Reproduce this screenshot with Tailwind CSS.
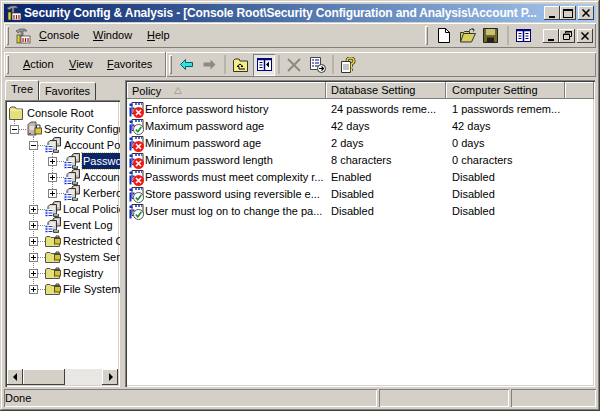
<!DOCTYPE html>
<html lang="en">
<head>
<meta charset="UTF-8">
<title>Security Config &amp; Analysis</title>
<script src="https://cdn.jsdelivr.net/npm/@tailwindcss/browser@4"></script>
</head>
<body class="m-0 overflow-hidden bg-[#d4d0c8]">
<!-- shared icons -->
<svg class="hidden">
  <symbol id="tool" viewBox="0 0 16 16">
    <path d="M1 3 L5 1 L10 1 L12 3 L8 3 L8 8 L6 8 L6 3 L3 5z" fill="#999" stroke="#444" stroke-width=".6"/>
    <rect x="2" y="7" width="3" height="8" fill="#e8d820" stroke="#333" stroke-width=".7"/>
    <rect x="6" y="8" width="9" height="7" fill="#fff" stroke="#333" stroke-width=".7"/>
    <path d="M8 10v4M10.500 10v4M13 10v4" stroke="#a01010" stroke-width="1.200"/>
  </symbol>
  <symbol id="folder" viewBox="0 0 16 16">
    <path d="M1.500 14.500V3.500L3 2h4l1.500 2h6v10.500z" fill="#e6e07a" stroke="#555" stroke-width="1"/>
    <path d="M2.500 5h11" stroke="#fffbc0"/>
  </symbol>
  <symbol id="lockfolder" viewBox="0 0 16 16">
    <path d="M.5 13.500V4.500L2 3.500h3l1 1h8.500v9z" fill="#e6e07a" stroke="#555" stroke-width="1"/>
    <rect x="9.500" y="5.500" width="6" height="5.500" fill="#d8c030" stroke="#333" stroke-width=".8"/>
    <path d="M11 5.500V3h3v2.500" fill="none" stroke="#333" stroke-width="1"/>
  </symbol>
  <symbol id="secsrv" viewBox="0 0 16 16">
    <path d="M2 3.500L5 1h5v13H2z" fill="#bdb9b0" stroke="#444" stroke-width=".9"/>
    <path d="M3.500 6h5M3.500 8h5" stroke="#fff"/>
    <rect x="3" y="12" width="2" height="1" fill="#c02020"/>
    <rect x="9" y="7" width="6.500" height="6" fill="#e0c830" stroke="#333" stroke-width=".8"/>
    <path d="M10.500 7V4h3.500v3" fill="none" stroke="#333" stroke-width="1"/>
  </symbol>
  <symbol id="policy" viewBox="0 0 16 16">
    <path d="M8 2L10 .5h5.500V9H8z" fill="#c4c0b8" stroke="#222" stroke-width=".9"/>
    <path d="M10 3h4M10 5h4" stroke="#fff"/>
    <path d="M3 5.500L5 3.500h6.500V13H3z" fill="#d8d4cc" stroke="#222" stroke-width=".9"/>
    <path d="M5 6h5M5 8h5" stroke="#fff"/>
    <rect x="0" y="8" width="8" height="8" fill="#fff"/>
    <path d="M.5 9.500h2M.5 12h2M.5 14.500h2" stroke="#1030d0" stroke-width="1.400"/>
    <path d="M3.500 9.500h4M3.500 12h4M3.500 14.500h4" stroke="#1030d0" stroke-width="1"/>
    <path d="M8.500 13v2.500h5V13" fill="#a8a49c" stroke="#222" stroke-width=".8"/>
  </symbol>
  <symbol id="bad" viewBox="0 0 16 16">
    <path d="M4 .5h11v11H4z" fill="#fff" stroke="#333"/>
    <path d="M2.500 5.500v9M5.500 5.500v2" stroke="#1830d0" stroke-width="2"/>
    <rect x="1.500" y="1.500" width="3" height="2.500" fill="#1830d0"/>
    <path d="M7 2h2M10 2h2M13 2h1" stroke="#1830d0" stroke-width="1.500"/>
    <circle cx="10.500" cy="10.500" r="5.500" fill="#f01818"/>
    <path d="M8 8l5 5M13 8l-5 5" stroke="#fff" stroke-width="1.600"/>
  </symbol>
  <symbol id="good" viewBox="0 0 16 16">
    <path d="M4 .5h11v11H4z" fill="#fff" stroke="#333"/>
    <path d="M2.500 5.500v9M5.500 5.500v2" stroke="#1830d0" stroke-width="2"/>
    <rect x="1.500" y="1.500" width="3" height="2.500" fill="#1830d0"/>
    <path d="M7 2h2M10 2h2M13 2h1" stroke="#1830d0" stroke-width="1.500"/>
    <circle cx="10.500" cy="10.500" r="5" fill="#fff" stroke="#555" stroke-width="1"/>
    <path d="M7.800 10.500l2 2.300 3.500-4.800" fill="none" stroke="#109030" stroke-width="1.600"/>
  </symbol>
</svg>

<div class="flex h-[411px] w-[600px] flex-col overflow-hidden bg-[#d4d0c8] font-['Liberation_Sans',sans-serif] text-[11px] text-black shadow-[inset_-1px_-1px_0_#404040,inset_1px_1px_0_#d4d0c8,inset_-2px_-2px_0_#808080,inset_2px_2px_0_#fff]">

  <!-- title bar -->
  <div class="mx-[4px] mt-[4px] flex h-[18px] shrink-0 items-center bg-gradient-to-r from-[#0a246a] to-[#a6caf0] pl-[2px] pr-[2px]">
    <svg class="h-[16px] w-[16px] shrink-0"><use href="#tool"/></svg>
    <span class="ml-[2px] flex-1 whitespace-nowrap text-[12px] font-bold leading-[18px] tracking-[-0.15px] text-white">Security Config &amp; Analysis - [Console Root\Security Configuration and Analysis\Account P...</span>
    <div class="flex items-center">
      <button class="flex h-[14px] w-[16px] items-end justify-center bg-[#d4d0c8] pb-[2px] shadow-[inset_-1px_-1px_0_#404040,inset_1px_1px_0_#fff]"><span class="h-[2px] w-[6px] bg-black"></span></button>
      <button class="flex h-[14px] w-[16px] items-center justify-center bg-[#d4d0c8] shadow-[inset_-1px_-1px_0_#404040,inset_1px_1px_0_#fff]"><span class="h-[9px] w-[10px] border border-t-2 border-black"></span></button>
      <button class="ml-[2px] flex h-[14px] w-[16px] items-center justify-center bg-[#d4d0c8] shadow-[inset_-1px_-1px_0_#404040,inset_1px_1px_0_#fff]">
        <svg width="8" height="8" viewBox="0 0 8 8"><path d="M.5.5l7 7M7.500.5l-7 7" stroke="#000" stroke-width="1.500"/></svg>
      </button>
    </div>
  </div>

  <!-- menu band -->
  <div class="mx-[4px] mt-[1px] flex h-[25px] shrink-0 items-center shadow-[inset_0_1px_0_#fff,inset_1px_0_0_#fff,inset_-1px_0_0_#808080,inset_0_-1px_0_#808080]">
    <span class="ml-[2px] h-[19px] w-[3px] bg-[#d4d0c8] shadow-[inset_1px_1px_0_#fff,inset_-1px_-1px_0_#808080]"></span>
    <svg class="ml-[6px] h-[16px] w-[16px]"><use href="#tool"/></svg>
    <nav class="ml-[8px] grid grid-cols-[54px_54px_auto]">
      <span><u>C</u>onsole</span><span><u>W</u>indow</span><span><u>H</u>elp</span>
    </nav>
    <div class="ml-auto flex h-full items-center pr-[3px]">
      <span class="h-[19px] w-[3px] shadow-[inset_1px_1px_0_#fff,inset_-1px_-1px_0_#808080]"></span>
      <svg class="ml-[10px]" width="12" height="15" viewBox="0 0 12 15"><path d="M.5.5h7l4 4v10H.5z" fill="#fff" stroke="#000"/><path d="M7.500.5v4h4" fill="none" stroke="#000"/></svg>
      <svg class="ml-[10px]" width="17" height="15" viewBox="0 0 17 15"><path d="M.5 14V4.500h3l1-1h5v2h-6L.5 14h11l4-8.500H3.500" fill="#d8cf60" stroke="#333"/><path d="M9 2.500Q11 0 14 1.500M14 1.500l-2-.8M14 1.500l-.5 2" fill="none" stroke="#333"/></svg>
      <svg class="ml-[6px]" width="15" height="15" viewBox="0 0 15 15"><path d="M.5.5h14v14H.5z" fill="#6f6a20" stroke="#222"/><rect x="3" y="1" width="9" height="6" fill="#c8c07a"/><rect x="4" y="9.500" width="7" height="5" fill="#222"/></svg>
      <span class="ml-[9px] h-[19px] w-[2px] bg-[#b8b4ac]"></span>
      <svg class="ml-[7px]" width="15" height="13" viewBox="0 0 15 13"><rect x=".5" y=".5" width="14" height="12" fill="#fff" stroke="#00007a"/><path d="M.5 1.500h14M7.500 1v11" stroke="#00007a" stroke-width="1.500"/><path d="M2.500 4.500h3M2.500 7h3M2.500 9.500h3M9.500 4.500h3M9.500 7h3M9.500 9.500h3" stroke="#00007a"/></svg>
      <!-- MDI child buttons -->
      <div class="ml-[12px] flex">
        <button class="flex h-[14px] w-[16px] items-end justify-center bg-[#d4d0c8] pb-[2px] shadow-[inset_-1px_-1px_0_#404040,inset_1px_1px_0_#fff]"><span class="h-[2px] w-[6px] bg-black"></span></button>
        <button class="flex h-[14px] w-[16px] items-center justify-center bg-[#d4d0c8] shadow-[inset_-1px_-1px_0_#404040,inset_1px_1px_0_#fff]">
          <svg width="9" height="9" viewBox="0 0 9 9"><path d="M2.500 2V.5h6v5H7M.5 3h6v5.500h-6z" fill="none" stroke="#000"/><path d="M.5 3.500h6M2.500 1h6" stroke="#000"/></svg>
        </button>
        <button class="ml-[2px] flex h-[14px] w-[16px] items-center justify-center bg-[#d4d0c8] shadow-[inset_-1px_-1px_0_#404040,inset_1px_1px_0_#fff]">
          <svg width="8" height="8" viewBox="0 0 8 8"><path d="M.5.5l7 7M7.500.5l-7 7" stroke="#000" stroke-width="1.500"/></svg>
        </button>
      </div>
    </div>
  </div>

  <!-- action toolbar -->
  <div class="mx-[4px] mt-[4px] flex h-[25px] shrink-0 items-center shadow-[inset_0_1px_0_#fff,inset_1px_0_0_#fff,inset_-1px_0_0_#808080,inset_0_-1px_0_#808080]">
    <span class="ml-[2px] h-[19px] w-[3px] shadow-[inset_1px_1px_0_#fff,inset_-1px_-1px_0_#808080]"></span>
    <nav class="ml-[14px] grid w-[129px] shrink-0 grid-cols-[46px_38px_auto]">
      <span><u>A</u>ction</span><span><u>V</u>iew</span><span><u>F</u>avorites</span>
    </nav>
    <span class="ml-[13px] h-[25px] w-[2px] bg-[#808080] shadow-[inset_-1px_0_0_#fff]"></span>
    <span class="ml-[2px] h-[19px] w-[3px] shadow-[inset_1px_1px_0_#fff,inset_-1px_-1px_0_#808080]"></span>
    <svg class="ml-[8px]" width="13" height="11" viewBox="0 0 13 11"><path d="M.5 5.500L5.500.5v3h7v4h-7v3z" fill="#30e0e8" stroke="#00606a"/></svg>
    <svg class="ml-[10px]" width="13" height="11" viewBox="0 0 13 11"><path d="M12.500 5.500L7.500.5v3h-7v4h7v3z" fill="#8c8a84"/></svg>
    <span class="ml-[8px] h-[19px] w-[2px] bg-[#b8b4ac]"></span>
    <svg class="ml-[7px]" width="15" height="14" viewBox="0 0 15 14"><path d="M.5 13.500V2.500L2 1h4l1 2h7.500v10.500z" fill="#f4ee88" stroke="#333"/><path d="M7 6l-3 2.500h2V11h6M7 6l3 2.500H8" fill="none" stroke="#000"/></svg>
    <span class="ml-[5px] flex h-[22px] w-[22px] items-center justify-center bg-[#e8e6e0] shadow-[inset_1px_1px_0_#808080,inset_-1px_-1px_0_#fff]">
      <svg width="15" height="13" viewBox="0 0 15 13"><rect x=".5" y=".5" width="14" height="12" fill="#fff" stroke="#00007a"/><path d="M.5 1.500h14M7.500 1v11" stroke="#00007a" stroke-width="1.500"/><path d="M2.500 4.500h3M2.500 7h3M2.500 9.500h3" stroke="#00007a"/><path d="M12 3.500v6L9 6.500z" fill="#000"/></svg>
    </span>
    <span class="ml-[3px] h-[19px] w-[2px] bg-[#b8b4ac]"></span>
    <svg class="ml-[7px]" width="14" height="14" viewBox="0 0 14 14"><path d="M1 1l12 12M13 1L1 13" stroke="#8c8a84" stroke-width="2"/></svg>
    <svg class="ml-[9px]" width="16" height="16" viewBox="0 0 16 16"><path d="M.5.5h10v12H.5z" fill="#fff" stroke="#444"/><path d="M2 3h2M5 3h4M2 6h2M5 6h4M2 9h2M5 9h3" stroke="#00007a"/><circle cx="11.500" cy="11.500" r="4" fill="#fff" stroke="#333"/><path d="M9 11.500h4M11.500 9.500l2 2-2 2" fill="none" stroke="#000" stroke-width="1.200"/></svg>
    <span class="ml-[6px] h-[19px] w-[2px] bg-[#b8b4ac]"></span>
    <svg class="ml-[7px]" width="15" height="16" viewBox="0 0 15 16"><path d="M.5 4.500h9v11h-9z" fill="#fff" stroke="#333"/><path d="M2 8h6M2 10h6M2 12h6" stroke="#888"/><path d="M6 4Q6 1 9.500 1T13 4Q13 6 10.500 7V10M10.500 11.500v2.500" fill="none" stroke="#333" stroke-width="3"/><path d="M6 4Q6 1 9.500 1T13 4Q13 6 10.500 7V10M10.500 11.500v2.500" fill="none" stroke="#f0e020" stroke-width="1.500"/></svg>
  </div>

  <!-- main area -->
  <div class="mx-[5px] mt-[3px] flex min-h-0 flex-1">
    <!-- left pane -->
    <div class="flex w-[115px] shrink-0 flex-col">
      <div class="flex h-[20px] shrink-0 items-end">
        <span class="z-10 flex h-[20px] w-[34px] items-center justify-center rounded-t-[2px] bg-[#d4d0c8] pb-[1px] shadow-[inset_1px_1px_0_#fff,inset_-1px_0_0_#404040]">Tree</span>
        <span class="flex h-[18px] w-[57px] items-center justify-center rounded-t-[2px] shadow-[inset_1px_1px_0_#fff,inset_-1px_0_0_#404040]">Favorites</span>
      </div>
      <div class="relative flex min-h-0 flex-1 flex-col bg-white shadow-[inset_1px_1px_0_#808080,inset_2px_2px_0_#404040,inset_-1px_-1px_0_#fff,inset_-2px_-2px_0_#d4d0c8]">
        <!-- dotted tree lines over the rows -->
        <span class="absolute left-[9px] top-[20px] h-[14px] border-l border-dotted border-[#808080]"></span>
        <span class="absolute left-[28px] top-[36px] h-[154px] border-l border-dotted border-[#808080]"></span>
        <span class="absolute left-[47px] top-[53px] h-[40px] border-l border-dotted border-[#808080]"></span>

        <div class="min-h-0 flex-1 overflow-hidden pl-[3px] pr-[2px] pt-[5px] leading-[16px]">
          <div class="flex h-[16px] items-center whitespace-nowrap pl-[0px]"><svg class="h-[16px] w-[16px] shrink-0"><use href="#folder"/></svg><span class="ml-[3px]">Console Root</span></div>

          <div class="flex h-[16px] items-center whitespace-nowrap pl-[2px]">
            <span class="z-10 flex h-[9px] w-[9px] shrink-0 items-center justify-center border border-[#808080] bg-white"><span class="h-px w-[5px] bg-black"></span></span>
            <span class="w-[7px] shrink-0 border-t border-dotted border-[#808080]"></span>
            <svg class="h-[16px] w-[16px] shrink-0"><use href="#secsrv"/></svg><span class="ml-[2px]">Security Configuration and Analysis</span>
          </div>

          <div class="flex h-[16px] items-center whitespace-nowrap pl-[21px]">
            <span class="z-10 flex h-[9px] w-[9px] shrink-0 items-center justify-center border border-[#808080] bg-white"><span class="h-px w-[5px] bg-black"></span></span>
            <span class="w-[7px] shrink-0 border-t border-dotted border-[#808080]"></span>
            <svg class="h-[16px] w-[16px] shrink-0"><use href="#policy"/></svg><span class="ml-[3px]">Account Policies</span>
          </div>

          <div class="flex h-[16px] items-center whitespace-nowrap pl-[40px]">
            <span class="relative z-10 flex h-[9px] w-[9px] shrink-0 items-center justify-center border border-[#808080] bg-white"><span class="h-px w-[5px] bg-black"></span><span class="absolute left-[3px] top-[1px] h-[5px] w-px bg-black"></span></span>
            <span class="w-[7px] shrink-0 border-t border-dotted border-[#808080]"></span>
            <svg class="h-[16px] w-[16px] shrink-0"><use href="#policy"/></svg><span class="ml-[2px] bg-[#0a246a] pl-[1px] pr-[4px] text-white outline-1 outline-dotted outline-[#d8c860]">Password Policy</span>
          </div>

          <div class="flex h-[16px] items-center whitespace-nowrap pl-[40px]">
            <span class="relative z-10 flex h-[9px] w-[9px] shrink-0 items-center justify-center border border-[#808080] bg-white"><span class="h-px w-[5px] bg-black"></span><span class="absolute left-[3px] top-[1px] h-[5px] w-px bg-black"></span></span>
            <span class="w-[7px] shrink-0 border-t border-dotted border-[#808080]"></span>
            <svg class="h-[16px] w-[16px] shrink-0"><use href="#policy"/></svg><span class="ml-[3px]">Account Lockout Policy</span>
          </div>

          <div class="flex h-[16px] items-center whitespace-nowrap pl-[40px]">
            <span class="relative z-10 flex h-[9px] w-[9px] shrink-0 items-center justify-center border border-[#808080] bg-white"><span class="h-px w-[5px] bg-black"></span><span class="absolute left-[3px] top-[1px] h-[5px] w-px bg-black"></span></span>
            <span class="w-[7px] shrink-0 border-t border-dotted border-[#808080]"></span>
            <svg class="h-[16px] w-[16px] shrink-0"><use href="#policy"/></svg><span class="ml-[3px]">Kerberos Policy</span>
          </div>

          <div class="flex h-[16px] items-center whitespace-nowrap pl-[21px]">
            <span class="relative z-10 flex h-[9px] w-[9px] shrink-0 items-center justify-center border border-[#808080] bg-white"><span class="h-px w-[5px] bg-black"></span><span class="absolute left-[3px] top-[1px] h-[5px] w-px bg-black"></span></span>
            <span class="w-[7px] shrink-0 border-t border-dotted border-[#808080]"></span>
            <svg class="h-[16px] w-[16px] shrink-0"><use href="#policy"/></svg><span class="ml-[2px]">Local Policies</span>
          </div>

          <div class="flex h-[16px] items-center whitespace-nowrap pl-[21px]">
            <span class="relative z-10 flex h-[9px] w-[9px] shrink-0 items-center justify-center border border-[#808080] bg-white"><span class="h-px w-[5px] bg-black"></span><span class="absolute left-[3px] top-[1px] h-[5px] w-px bg-black"></span></span>
            <span class="w-[7px] shrink-0 border-t border-dotted border-[#808080]"></span>
            <svg class="h-[16px] w-[16px] shrink-0"><use href="#policy"/></svg><span class="ml-[2px]">Event Log</span>
          </div>

          <div class="flex h-[16px] items-center whitespace-nowrap pl-[21px]">
            <span class="relative z-10 flex h-[9px] w-[9px] shrink-0 items-center justify-center border border-[#808080] bg-white"><span class="h-px w-[5px] bg-black"></span><span class="absolute left-[3px] top-[1px] h-[5px] w-px bg-black"></span></span>
            <span class="w-[7px] shrink-0 border-t border-dotted border-[#808080]"></span>
            <svg class="h-[16px] w-[16px] shrink-0"><use href="#lockfolder"/></svg><span class="ml-[2px]">Restricted Groups</span>
          </div>

          <div class="flex h-[16px] items-center whitespace-nowrap pl-[21px]">
            <span class="relative z-10 flex h-[9px] w-[9px] shrink-0 items-center justify-center border border-[#808080] bg-white"><span class="h-px w-[5px] bg-black"></span><span class="absolute left-[3px] top-[1px] h-[5px] w-px bg-black"></span></span>
            <span class="w-[7px] shrink-0 border-t border-dotted border-[#808080]"></span>
            <svg class="h-[16px] w-[16px] shrink-0"><use href="#lockfolder"/></svg><span class="ml-[2px]">System Services</span>
          </div>

          <div class="flex h-[16px] items-center whitespace-nowrap pl-[21px]">
            <span class="relative z-10 flex h-[9px] w-[9px] shrink-0 items-center justify-center border border-[#808080] bg-white"><span class="h-px w-[5px] bg-black"></span><span class="absolute left-[3px] top-[1px] h-[5px] w-px bg-black"></span></span>
            <span class="w-[7px] shrink-0 border-t border-dotted border-[#808080]"></span>
            <svg class="h-[16px] w-[16px] shrink-0"><use href="#lockfolder"/></svg><span class="ml-[2px]">Registry</span>
          </div>

          <div class="flex h-[16px] items-center whitespace-nowrap pl-[21px]">
            <span class="relative z-10 flex h-[9px] w-[9px] shrink-0 items-center justify-center border border-[#808080] bg-white"><span class="h-px w-[5px] bg-black"></span><span class="absolute left-[3px] top-[1px] h-[5px] w-px bg-black"></span></span>
            <span class="w-[7px] shrink-0 border-t border-dotted border-[#808080]"></span>
            <svg class="h-[16px] w-[16px] shrink-0"><use href="#lockfolder"/></svg><span class="ml-[2px]">File System</span>
          </div>
        </div>

        <!-- horizontal scrollbar -->
        <div class="mx-[2px] mb-[2px] flex h-[16px] shrink-0 bg-[#e9e7e3]">
          <button class="flex h-[16px] w-[16px] items-center justify-center bg-[#d4d0c8] shadow-[inset_-1px_-1px_0_#404040,inset_1px_1px_0_#fff]"><svg width="5" height="8" viewBox="0 0 5 8"><path d="M4 0v8L0 4z"/></svg></button>
          <span class="h-[16px] w-[42px] bg-[#d4d0c8] shadow-[inset_-1px_-1px_0_#404040,inset_1px_1px_0_#fff]"></span>
          <button class="ml-auto flex h-[16px] w-[16px] items-center justify-center bg-[#d4d0c8] shadow-[inset_-1px_-1px_0_#404040,inset_1px_1px_0_#fff]"><svg width="5" height="8" viewBox="0 0 5 8"><path d="M1 0v8l4-4z"/></svg></button>
        </div>
      </div>
    </div>

    <!-- right pane -->
    <div class="ml-[5px] flex min-w-0 flex-1 flex-col bg-white shadow-[inset_1px_1px_0_#808080,inset_2px_2px_0_#404040,inset_-1px_-1px_0_#fff,inset_-2px_-2px_0_#d4d0c8]">
      <div class="ml-[2px] mr-[1px] mt-[2px] grid h-[17px] shrink-0 grid-cols-[199px_120px_119px_1fr] bg-[#d4d0c8] leading-[16px]">
        <div class="flex items-center pl-[5px] shadow-[inset_-1px_-1px_0_#808080,inset_1px_1px_0_#fff]">Policy<svg class="ml-[13px]" width="8" height="7" viewBox="0 0 8 7"><path d="M4 .5L7.500 6.500H.5z" fill="none" stroke="#a8a49c"/></svg></div>
        <div class="pl-[5px] shadow-[inset_-1px_-1px_0_#808080,inset_1px_1px_0_#fff]">Database Setting</div>
        <div class="pl-[6px] shadow-[inset_-1px_-1px_0_#808080,inset_1px_1px_0_#fff]">Computer Setting</div>
        <div class="shadow-[inset_-1px_-1px_0_#808080,inset_1px_1px_0_#fff]"></div>
      </div>
      <div class="ml-[2px] grid grid-cols-[199px_120px_119px] pt-[2px] leading-[17px] [&>div]:h-[17px] [&>div]:overflow-hidden [&>div]:whitespace-nowrap">
        <div class="flex items-center"><svg class="ml-[1px] h-[16px] w-[16px] shrink-0"><use href="#bad"/></svg><span class="ml-[1px]">Enforce password history</span></div><div class="pl-[5px]">24 passwords reme...</div><div class="pl-[6px]">1 passwords remem...</div>
        <div class="flex items-center"><svg class="ml-[1px] h-[16px] w-[16px] shrink-0"><use href="#good"/></svg><span class="ml-[1px]">Maximum password age</span></div><div class="pl-[5px]">42 days</div><div class="pl-[6px]">42 days</div>
        <div class="flex items-center"><svg class="ml-[1px] h-[16px] w-[16px] shrink-0"><use href="#bad"/></svg><span class="ml-[1px]">Minimum password age</span></div><div class="pl-[5px]">2 days</div><div class="pl-[6px]">0 days</div>
        <div class="flex items-center"><svg class="ml-[1px] h-[16px] w-[16px] shrink-0"><use href="#bad"/></svg><span class="ml-[1px]">Minimum password length</span></div><div class="pl-[5px]">8 characters</div><div class="pl-[6px]">0 characters</div>
        <div class="flex items-center"><svg class="ml-[1px] h-[16px] w-[16px] shrink-0"><use href="#bad"/></svg><span class="ml-[1px]">Passwords must meet complexity r...</span></div><div class="pl-[5px]">Enabled</div><div class="pl-[6px]">Disabled</div>
        <div class="flex items-center"><svg class="ml-[1px] h-[16px] w-[16px] shrink-0"><use href="#good"/></svg><span class="ml-[1px]">Store password using reversible e...</span></div><div class="pl-[5px]">Disabled</div><div class="pl-[6px]">Disabled</div>
        <div class="flex items-center"><svg class="ml-[1px] h-[16px] w-[16px] shrink-0"><use href="#good"/></svg><span class="ml-[1px]">User must log on to change the pa...</span></div><div class="pl-[5px]">Disabled</div><div class="pl-[6px]">Disabled</div>
      </div>
    </div>
  </div>

  <!-- status bar -->
  <div class="mx-[4px] mb-[4px] mt-[2px] grid h-[18px] shrink-0 grid-cols-[373px_1fr_85px] gap-[2px]">
    <div class="pl-[1px] leading-[18px] shadow-[inset_1px_1px_0_#808080,inset_-1px_-1px_0_#fff]">Done</div>
    <div class="shadow-[inset_1px_1px_0_#808080,inset_-1px_-1px_0_#fff]"></div>
    <div class="shadow-[inset_1px_1px_0_#808080,inset_-1px_-1px_0_#fff]"></div>
  </div>
</div>
</body>
</html>
